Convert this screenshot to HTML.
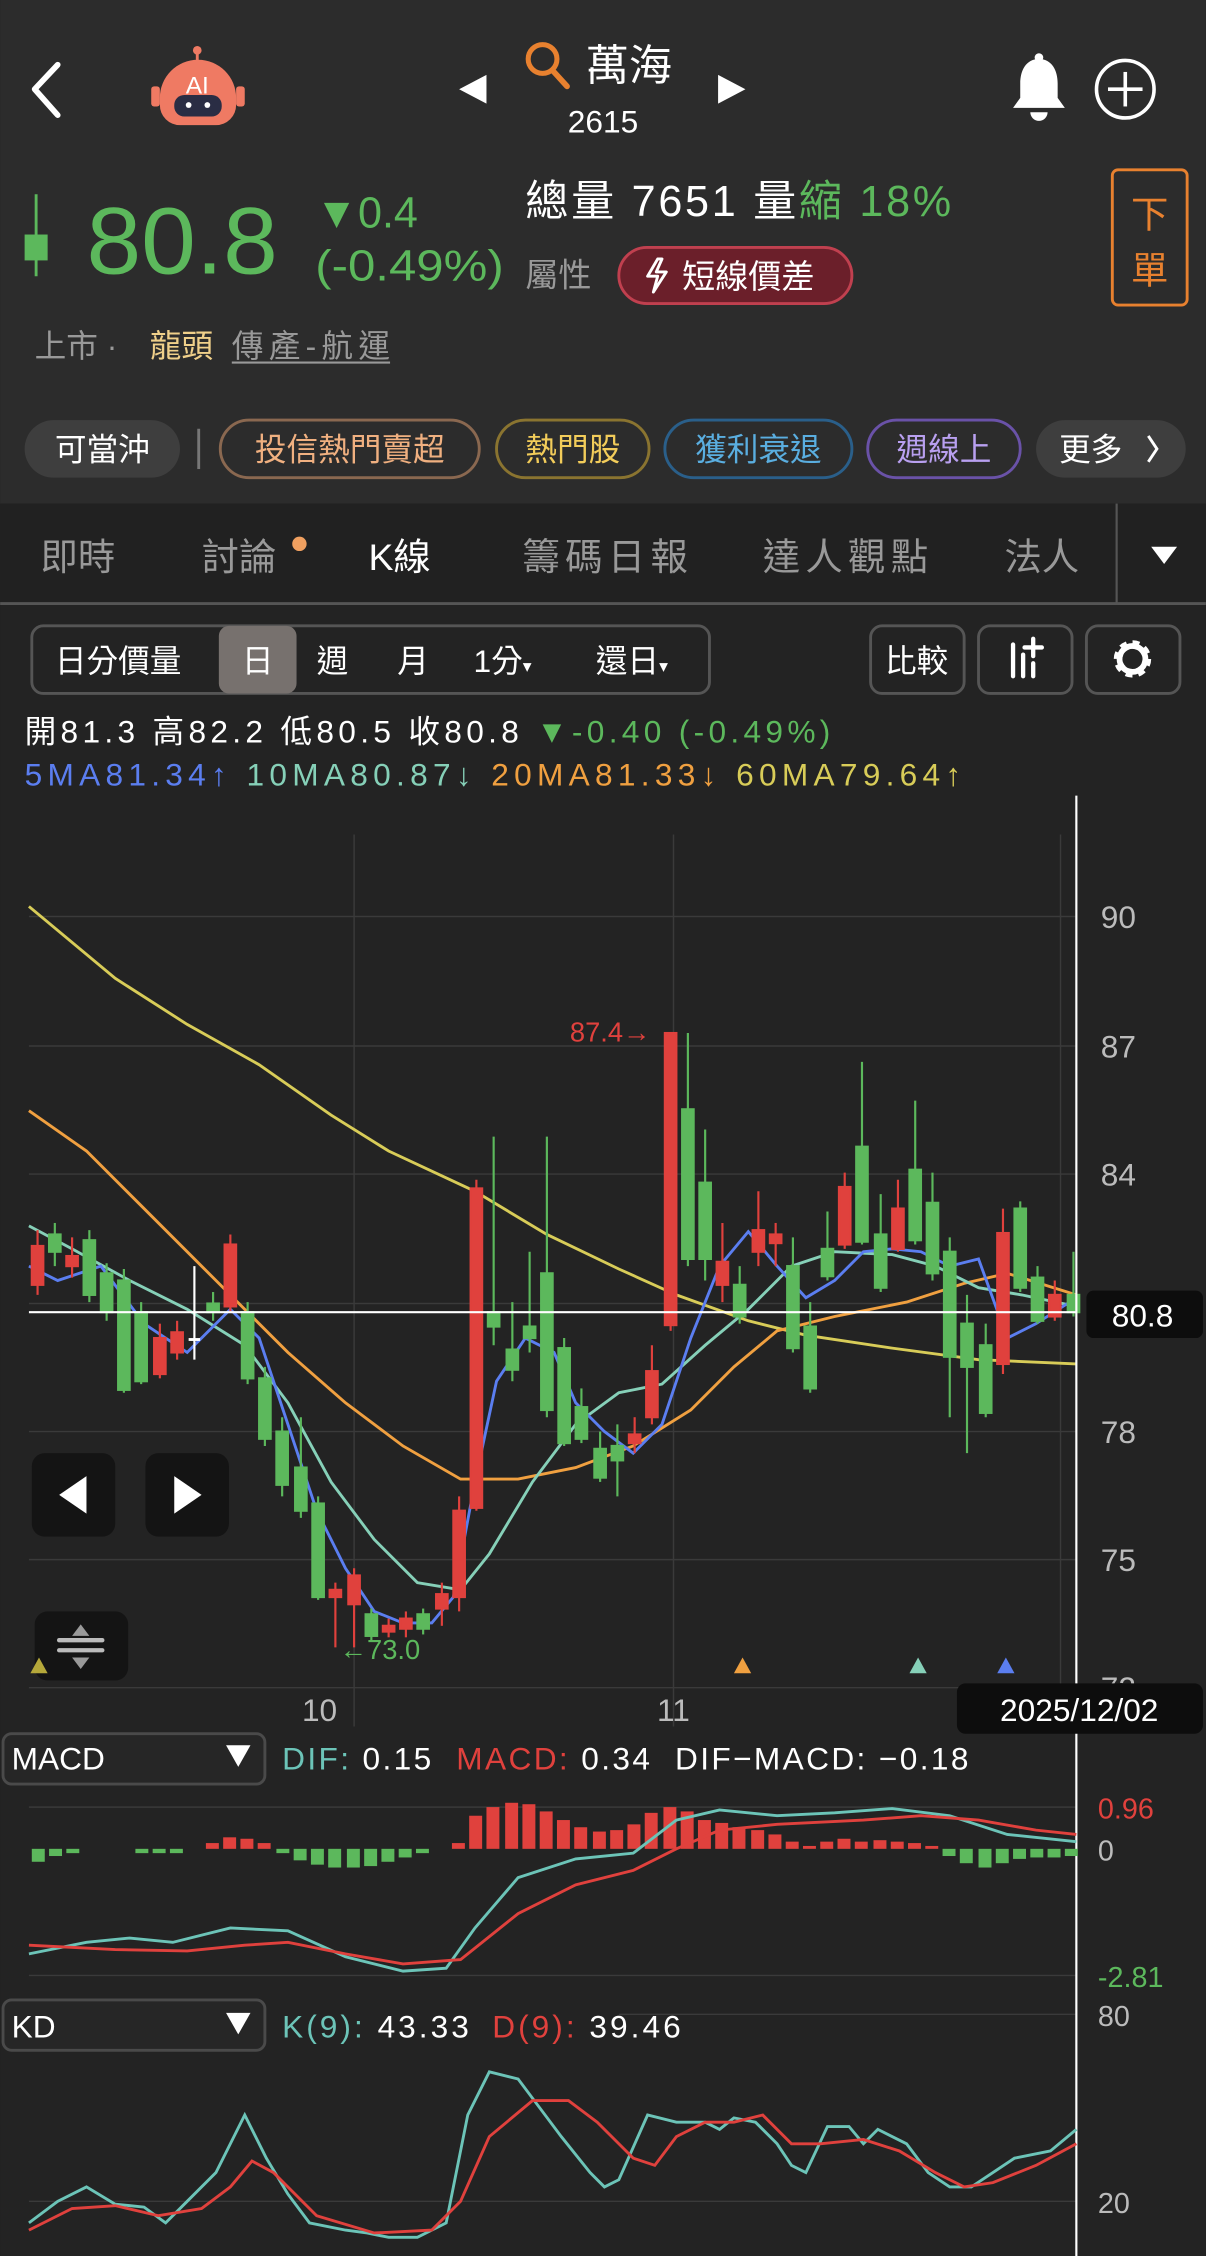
<!DOCTYPE html>
<html><head><meta charset="utf-8">
<style>
html,body{margin:0;padding:0;background:#232323;}
svg{display:block;}
text{font-family:"Liberation Sans","Noto Sans CJK TC",sans-serif;}
</style></head><body>
<svg width="1206" height="2256" viewBox="0 0 838 1568" xmlns="http://www.w3.org/2000/svg">
<rect x="0" y="0" width="838" height="350" fill="#2c2c2c"/>
<rect x="0" y="350" width="838" height="70" fill="#212121"/>
<rect x="0" y="420" width="838" height="1148" fill="#232323"/>
<line x1="0" y1="419.5" x2="838" y2="419.5" stroke="#555" stroke-width="2"/>

<!-- header -->
<path d="M40 45 L24 62 L40 80" fill="none" stroke="#fff" stroke-width="4" stroke-linecap="round" stroke-linejoin="round"/>
<g>
<line x1="137" y1="35" x2="137" y2="44" stroke="#ef7a63" stroke-width="2"/>
<circle cx="137" cy="35" r="3" fill="#ef7a63"/>
<rect x="105" y="60" width="6" height="14" rx="2" fill="#ef7a63"/>
<rect x="164" y="60" width="6" height="14" rx="2" fill="#ef7a63"/>
<path d="M111 68 a26 26 0 0 1 53 0 v5 a14 14 0 0 1 -14 14 h-25 a14 14 0 0 1 -14 -14z" fill="#ef7a63"/>
<rect x="121" y="66" width="33" height="15" rx="7" fill="#2a2d44"/>
<circle cx="131" cy="73" r="2" fill="#fff"/><circle cx="144" cy="73" r="2" fill="#fff"/>
<text x="137" y="65" font-size="17" fill="#fff" text-anchor="middle">AI</text>
</g>
<path d="M338 52 L319 62 L338 72Z" fill="#fff"/>
<path d="M499 52 L518 62 L499 72Z" fill="#fff"/>
<circle cx="377" cy="41" r="10" fill="none" stroke="#e8812f" stroke-width="3.5"/>
<line x1="384" y1="49" x2="394" y2="60" stroke="#e8812f" stroke-width="4" stroke-linecap="round"/>
<text x="407" y="56" font-size="30" fill="#fff">萬海</text>
<text x="419" y="92" font-size="22" fill="#fff" text-anchor="middle">2615</text>
<path d="M722 41 c-9 0 -13 8 -13 17 v10 l-5 7 h36 l-5 -7 v-10 c0 -9 -4 -17 -13 -17z" fill="#fff"/>
<circle cx="722" cy="40" r="3" fill="#fff"/>
<path d="M716 78 a6 6 0 0 0 12 0z" fill="#fff"/>
<circle cx="782" cy="62" r="20" fill="none" stroke="#fff" stroke-width="2.5"/>
<line x1="770" y1="62" x2="794" y2="62" stroke="#fff" stroke-width="2.5"/>
<line x1="782" y1="50" x2="782" y2="74" stroke="#fff" stroke-width="2.5"/>

<!-- price -->
<line x1="25" y1="135" x2="25" y2="192" stroke="#5cb85c" stroke-width="2"/>
<rect x="17" y="163" width="16" height="18" fill="#5cb85c"/>
<text x="60" y="190" font-size="66" fill="#5cb85c" textLength="133" lengthAdjust="spacingAndGlyphs">80.8</text>
<text x="219" y="158" font-size="30" fill="#5cb85c">▼0.4</text>
<text x="219" y="195" font-size="30" fill="#5cb85c" textLength="131" lengthAdjust="spacingAndGlyphs">(-0.49%)</text>
<text x="365" y="150" font-size="30" fill="#fff" textLength="296" lengthAdjust="spacing">總量 7651  量<tspan fill="#5cb85c">縮 18%</tspan></text>
<text x="365" y="199" font-size="23" fill="#999">屬性</text>
<rect x="430" y="172" width="162" height="39" rx="19.5" fill="#6b1f2a" stroke="#c0404f" stroke-width="2"/>
<path d="M457 180 l-7 12 h7 l-3 11 l9 -14 h-7 l4 -9z" fill="none" stroke="#fff" stroke-width="2" stroke-linejoin="round"/>
<text x="474" y="200" font-size="23" fill="#fff">短線價差</text>
<rect x="773" y="118" width="52" height="94" rx="4" fill="none" stroke="#e8812f" stroke-width="2"/>
<text x="799" y="158" font-size="26" fill="#e8812f" text-anchor="middle">下</text>
<text x="799" y="197" font-size="26" fill="#e8812f" text-anchor="middle">單</text>
<text x="24" y="248" font-size="22" fill="#999">上市 ·</text>
<text x="104" y="248" font-size="22" fill="#f0d08a">龍頭</text>
<text x="161" y="248" font-size="22" fill="#999" textLength="110" lengthAdjust="spacing">傳產-航運</text>
<line x1="161" y1="252" x2="271" y2="252" stroke="#999" stroke-width="1.5"/>

<!-- tags -->
<rect x="17" y="292" width="108" height="40" rx="20" fill="#3e3e3e"/>
<text x="71" y="320" font-size="22" fill="#fff" text-anchor="middle">可當沖</text>
<line x1="138" y1="298" x2="138" y2="326" stroke="#777" stroke-width="2"/>
<rect x="153" y="292" width="180" height="40" rx="20" fill="none" stroke="#8a6850" stroke-width="2"/>
<text x="243" y="320" font-size="22" fill="#f0b080" text-anchor="middle">投信熱門賣超</text>
<rect x="345" y="292" width="106" height="40" rx="20" fill="none" stroke="#8a7430" stroke-width="2"/>
<text x="398" y="320" font-size="22" fill="#f2cc5a" text-anchor="middle">熱門股</text>
<rect x="462" y="292" width="130" height="40" rx="20" fill="none" stroke="#2a5f8a" stroke-width="2"/>
<text x="527" y="320" font-size="22" fill="#5aaee0" text-anchor="middle">獲利衰退</text>
<rect x="603" y="292" width="106" height="40" rx="20" fill="none" stroke="#6a52a8" stroke-width="2"/>
<text x="656" y="320" font-size="22" fill="#b9a0f0" text-anchor="middle">週線上</text>
<rect x="720" y="292" width="104" height="40" rx="20" fill="#3e3e3e"/>
<text x="736" y="320" font-size="22" fill="#fff">更多</text>
<path d="M798 303 l6 9 l-6 9" fill="none" stroke="#fff" stroke-width="2"/>

<!-- tabs -->
<text x="28" y="396" font-size="26" fill="#999">即時</text>
<text x="140" y="396" font-size="26" fill="#999">討論</text>
<circle cx="208" cy="378" r="5" fill="#f0a060"/>
<text x="256" y="396" font-size="26" fill="#fff">K線</text>
<text x="363" y="396" font-size="26" fill="#999" textLength="115" lengthAdjust="spacing">籌碼日報</text>
<text x="530" y="396" font-size="26" fill="#999" textLength="115" lengthAdjust="spacing">達人觀點</text>
<text x="698" y="396" font-size="26" fill="#999">法人</text>
<line x1="776" y1="350" x2="776" y2="420" stroke="#555" stroke-width="1.5"/>
<path d="M800 380 h18 l-9 12z" fill="#fff"/>

<!-- toolbar -->
<rect x="22" y="435" width="471" height="47" rx="8" fill="none" stroke="#555" stroke-width="2"/>
<rect x="152" y="435" width="54" height="47" rx="7" fill="#77716e"/>
<g font-size="22" fill="#fff">
<text x="38" y="467">日分價量</text>
<text x="168" y="467">日</text>
<text x="220" y="467">週</text>
<text x="276" y="467">月</text>
<text x="329" y="467">1分<tspan font-size="12">▾</tspan></text>
<text x="414" y="467">還日<tspan font-size="12">▾</tspan></text>
</g>
<rect x="605" y="435" width="65" height="47" rx="8" fill="none" stroke="#555" stroke-width="2"/>
<text x="637" y="467" font-size="22" fill="#fff" text-anchor="middle">比較</text>
<rect x="680" y="435" width="65" height="47" rx="8" fill="none" stroke="#555" stroke-width="2"/>
<g stroke="#fff" stroke-width="3" stroke-linecap="round">
<line x1="704" y1="448" x2="704" y2="470"/><line x1="711" y1="455" x2="711" y2="470"/><line x1="718" y1="461" x2="718" y2="470"/>
<line x1="718" y1="444" x2="718" y2="456"/><line x1="712" y1="450" x2="724" y2="450"/>
</g>
<rect x="755" y="435" width="65" height="47" rx="8" fill="none" stroke="#555" stroke-width="2"/>
<g transform="translate(787,458)">
<circle r="10" fill="none" stroke="#fff" stroke-width="6" stroke-dasharray="4.2 3.65"/>
<circle r="9" fill="none" stroke="#fff" stroke-width="4"/>
</g>

<text x="17" y="516" font-size="22" fill="#fff" textLength="560" lengthAdjust="spacing">開81.3 高82.2 低80.5 收80.8 <tspan fill="#5cb85c">▼-0.40 (-0.49%)</tspan></text>
<text x="17" y="546" font-size="22" textLength="651" lengthAdjust="spacing"><tspan fill="#5b7ef0">5MA81.34↑</tspan><tspan fill="#86d0b8" dx="10">10MA80.87↓</tspan><tspan fill="#f0a040" dx="10">20MA81.33↓</tspan><tspan fill="#d8cc58" dx="10">60MA79.64↑</tspan></text>

<!-- grid -->
<g stroke="#3a3a3a" stroke-width="1">
<line x1="20" y1="637" x2="748" y2="637"/><line x1="20" y1="727" x2="748" y2="727"/><line x1="20" y1="816" x2="748" y2="816"/>
<line x1="20" y1="906" x2="748" y2="906"/><line x1="20" y1="995" x2="748" y2="995"/><line x1="20" y1="1084" x2="748" y2="1084"/>
<line x1="20" y1="1173" x2="748" y2="1173"/>
<line x1="246" y1="580" x2="246" y2="1200"/><line x1="468" y1="580" x2="468" y2="1200"/><line x1="737" y1="580" x2="737" y2="1200"/>
<line x1="20" y1="1256" x2="748" y2="1256"/><line x1="20" y1="1373" x2="748" y2="1373"/>
<line x1="430" y1="1400" x2="748" y2="1400"/><line x1="20" y1="1530" x2="748" y2="1530"/>
</g>
<g font-size="22" fill="#bbb">
<text x="765" y="645">90</text><text x="765" y="735">87</text><text x="765" y="824">84</text>
<text x="765" y="1003">78</text><text x="765" y="1092">75</text><text x="765" y="1181">72</text>
</g>

<!-- MA lines -->
<g fill="none" stroke-width="2">
<polyline stroke="#d8cc58" points="20,630 80,680 130,712 180,740 230,775 270,800 330,828 380,858 430,882 470,900 520,918 560,928 620,937 680,945 748,948"/>
<polyline stroke="#f0a040" points="20,772 60,800 100,840 150,890 200,940 240,975 280,1005 320,1028 360,1028 400,1020 440,1005 480,980 510,950 540,925 580,915 630,905 670,892 700,885 748,900"/>
<polyline stroke="#86d0b8" points="20,852 50,868 90,890 130,910 170,935 200,975 230,1030 260,1070 290,1100 320,1105 340,1080 370,1030 400,990 430,968 460,962 490,935 520,910 550,880 580,870 620,872 650,880 680,895 710,900 748,908"/>
<polyline stroke="#5b7ef0" points="20,880 40,890 70,880 100,920 130,940 160,910 180,930 200,990 220,1050 240,1090 260,1120 280,1128 300,1128 315,1110 330,1030 345,960 365,930 385,940 400,975 420,995 440,1010 460,990 480,930 500,880 520,856 540,880 560,902 580,890 600,870 620,868 640,870 660,880 680,875 700,930 720,920 748,902"/>
</g>

<!-- candles -->
<g stroke-width="1.5">
<g stroke="#e0413d" fill="#e0413d">
<line x1="26" y1="855" x2="26" y2="900"/><rect x="22" y="866" width="8" height="27"/>
<line x1="50" y1="860" x2="50" y2="888"/><rect x="46" y="873" width="8" height="7"/>
<line x1="111" y1="920" x2="111" y2="958"/><rect x="107" y="930" width="8" height="25"/>
<line x1="123" y1="918" x2="123" y2="945"/><rect x="119" y="926" width="8" height="14"/>
<line x1="160" y1="858" x2="160" y2="912"/><rect x="156" y="865" width="8" height="43"/>
<line x1="233" y1="1100" x2="233" y2="1145"/><rect x="229" y="1105" width="8" height="5"/>
<line x1="246" y1="1090" x2="246" y2="1145"/><rect x="242" y="1095" width="8" height="20"/>
<line x1="270" y1="1125" x2="270" y2="1138"/><rect x="266" y="1130" width="8" height="4"/>
<line x1="282" y1="1120" x2="282" y2="1138"/><rect x="278" y="1125" width="8" height="7"/>
<line x1="307" y1="1100" x2="307" y2="1130"/><rect x="303" y="1108" width="8" height="10"/>
<line x1="319" y1="1040" x2="319" y2="1120"/><rect x="315" y="1050" width="8" height="60"/>
<line x1="331" y1="820" x2="331" y2="1050"/><rect x="327" y="826" width="8" height="222"/>
<line x1="441" y1="985" x2="441" y2="1010"/><rect x="437" y="997" width="8" height="6"/>
<line x1="453" y1="935" x2="453" y2="990"/><rect x="449" y="953" width="8" height="32"/>
<line x1="466" y1="718" x2="466" y2="925"/><rect x="462" y="718" width="8" height="203"/>
<line x1="502" y1="850" x2="502" y2="905"/><rect x="498" y="877" width="8" height="16"/>
<line x1="527" y1="828" x2="527" y2="880"/><rect x="523" y="855" width="8" height="15"/>
<line x1="539" y1="850" x2="539" y2="880"/><rect x="535" y="858" width="8" height="6"/>
<line x1="587" y1="815" x2="587" y2="868"/><rect x="583" y="825" width="8" height="40"/>
<line x1="624" y1="820" x2="624" y2="870"/><rect x="620" y="840" width="8" height="28"/>
<line x1="697" y1="840" x2="697" y2="955"/><rect x="693" y="857" width="8" height="91"/>
<line x1="733" y1="890" x2="733" y2="918"/><rect x="729" y="900" width="8" height="15"/>
</g>
<g stroke="#5cb85c" fill="#5cb85c">
<line x1="38" y1="850" x2="38" y2="880"/><rect x="34" y="858" width="8" height="12"/>
<line x1="62" y1="855" x2="62" y2="905"/><rect x="58" y="862" width="8" height="38"/>
<line x1="74" y1="878" x2="74" y2="918"/><rect x="70" y="885" width="8" height="27"/>
<line x1="86" y1="882" x2="86" y2="968"/><rect x="82" y="890" width="8" height="76"/>
<line x1="98" y1="905" x2="98" y2="962"/><rect x="94" y="912" width="8" height="48"/>
<line x1="148" y1="898" x2="148" y2="918"/><rect x="144" y="906" width="8" height="6"/>
<line x1="172" y1="905" x2="172" y2="962"/><rect x="168" y="912" width="8" height="46"/>
<line x1="184" y1="950" x2="184" y2="1005"/><rect x="180" y="958" width="8" height="42"/>
<line x1="196" y1="985" x2="196" y2="1040"/><rect x="192" y="995" width="8" height="37"/>
<line x1="209" y1="985" x2="209" y2="1055"/><rect x="205" y="1020" width="8" height="30"/>
<line x1="221" y1="1040" x2="221" y2="1112"/><rect x="217" y="1045" width="8" height="65"/>
<line x1="258" y1="1118" x2="258" y2="1140"/><rect x="254" y="1122" width="8" height="15"/>
<line x1="294" y1="1118" x2="294" y2="1136"/><rect x="290" y="1122" width="8" height="10"/>
<line x1="343" y1="790" x2="343" y2="935"/><rect x="339" y="912" width="8" height="10"/>
<line x1="356" y1="905" x2="356" y2="960"/><rect x="352" y="938" width="8" height="14"/>
<line x1="368" y1="870" x2="368" y2="940"/><rect x="364" y="922" width="8" height="8"/>
<line x1="380" y1="790" x2="380" y2="985"/><rect x="376" y="885" width="8" height="95"/>
<line x1="392" y1="930" x2="392" y2="1005"/><rect x="388" y="937" width="8" height="66"/>
<line x1="404" y1="965" x2="404" y2="1003"/><rect x="400" y="978" width="8" height="22"/>
<line x1="417" y1="995" x2="417" y2="1030"/><rect x="413" y="1007" width="8" height="20"/>
<line x1="429" y1="990" x2="429" y2="1040"/><rect x="425" y="1005" width="8" height="10"/>
<line x1="478" y1="718" x2="478" y2="880"/><rect x="474" y="771" width="8" height="104"/>
<line x1="490" y1="785" x2="490" y2="890"/><rect x="486" y="822" width="8" height="53"/>
<line x1="514" y1="880" x2="514" y2="920"/><rect x="510" y="893" width="8" height="22"/>
<line x1="551" y1="860" x2="551" y2="940"/><rect x="547" y="880" width="8" height="57"/>
<line x1="563" y1="905" x2="563" y2="968"/><rect x="559" y="922" width="8" height="43"/>
<line x1="575" y1="842" x2="575" y2="890"/><rect x="571" y="868" width="8" height="19"/>
<line x1="599" y1="738" x2="599" y2="865"/><rect x="595" y="797" width="8" height="66"/>
<line x1="612" y1="830" x2="612" y2="898"/><rect x="608" y="858" width="8" height="37"/>
<line x1="636" y1="765" x2="636" y2="865"/><rect x="632" y="813" width="8" height="49"/>
<line x1="648" y1="815" x2="648" y2="890"/><rect x="644" y="836" width="8" height="49"/>
<line x1="660" y1="860" x2="660" y2="985"/><rect x="656" y="870" width="8" height="73"/>
<line x1="672" y1="900" x2="672" y2="1010"/><rect x="668" y="920" width="8" height="30"/>
<line x1="685" y1="920" x2="685" y2="985"/><rect x="681" y="935" width="8" height="47"/>
<line x1="709" y1="835" x2="709" y2="898"/><rect x="705" y="840" width="8" height="55"/>
<line x1="721" y1="880" x2="721" y2="920"/><rect x="717" y="888" width="8" height="30"/>
<line x1="746" y1="870" x2="746" y2="915"/><rect x="742" y="900" width="8" height="12"/>
</g>
<line x1="135" y1="880" x2="135" y2="945" stroke="#fff"/><line x1="131" y1="931" x2="139" y2="931" stroke="#fff" stroke-width="2"/>
</g>
<text x="396" y="724" font-size="19" fill="#e0413d">87.4→</text>
<text x="236" y="1153" font-size="19" fill="#5cb85c">←73.0</text>

<!-- crosshair -->
<line x1="748" y1="553" x2="748" y2="1568" stroke="#fff" stroke-width="1.5"/>
<line x1="20" y1="912" x2="748" y2="912" stroke="#fff" stroke-width="1.5"/>
<rect x="755" y="897" width="81" height="33" rx="5" fill="#0d0d0d"/>
<text x="794" y="922" font-size="22" fill="#fff" text-anchor="middle">80.8</text>

<!-- nav buttons -->
<rect x="22" y="1010" width="58" height="58" rx="9" fill="#141414"/>
<path d="M60 1026 L41 1039 L60 1052Z" fill="#fff"/>
<rect x="101" y="1010" width="58" height="58" rx="9" fill="#141414"/>
<path d="M121 1026 L140 1039 L121 1052Z" fill="#fff"/>
<rect x="24" y="1120" width="65" height="48" rx="9" fill="#141414"/>
<path d="M56 1129 l-6 8 h12z M56 1160 l-6 -8 h12z" fill="#999"/>
<line x1="41" y1="1140" x2="71" y2="1140" stroke="#bbb" stroke-width="3" stroke-linecap="round"/>
<line x1="41" y1="1147" x2="71" y2="1147" stroke="#bbb" stroke-width="3" stroke-linecap="round"/>
<path d="M27 1152 l-6 11 h12z" fill="#b5a83a"/>
<path d="M516 1152 l-6 11 h12z" fill="#f0a040"/>
<path d="M638 1152 l-6 11 h12z" fill="#86d0b8"/>
<path d="M699 1152 l-6 11 h12z" fill="#5b7ef0"/>
<text x="222" y="1196" font-size="22" fill="#bbb" text-anchor="middle">10</text>
<text x="468" y="1196" font-size="22" fill="#bbb" text-anchor="middle">11</text>
<rect x="665" y="1170" width="171" height="35" rx="6" fill="#0d0d0d"/>
<text x="750" y="1196" font-size="22" fill="#fff" text-anchor="middle">2025/12/02</text>

<!-- MACD -->
<rect x="2" y="1205" width="182" height="35" rx="6" fill="#262626" stroke="#4a4a4a" stroke-width="2"/>
<text x="8" y="1230" font-size="22" fill="#fff">MACD</text>
<path d="M157 1213 h17 l-8.5 15z" fill="#fff"/>
<text x="196" y="1230" font-size="22" textLength="477" lengthAdjust="spacing"><tspan fill="#6cc4b8">DIF:</tspan><tspan fill="#fff"> 0.15  </tspan><tspan fill="#e0413d" dx="8">MACD:</tspan><tspan fill="#fff"> 0.34  </tspan><tspan fill="#fff" dx="8">DIF−MACD: −0.18</tspan></text>
<text x="763" y="1264" font-size="20" fill="#e0413d">0.96</text>
<text x="763" y="1293" font-size="20" fill="#bbb">0</text>
<text x="763" y="1381" font-size="20" fill="#5cb85c">-2.81</text>
<g fill="#5cb85c">
<rect x="22" y="1285" width="9" height="9"/><rect x="34" y="1285" width="9" height="5"/><rect x="46" y="1285" width="9" height="3"/>
<rect x="94" y="1285" width="9" height="3"/><rect x="106" y="1285" width="9" height="3"/><rect x="118" y="1285" width="9" height="3"/>
<rect x="192" y="1285" width="9" height="3"/><rect x="204" y="1285" width="9" height="8"/><rect x="216" y="1285" width="9" height="11"/><rect x="228" y="1285" width="9" height="13"/><rect x="241" y="1285" width="9" height="13"/><rect x="253" y="1285" width="9" height="12"/><rect x="265" y="1285" width="9" height="9"/><rect x="277" y="1285" width="9" height="6"/><rect x="289" y="1285" width="9" height="3"/>
<rect x="655" y="1285" width="9" height="5"/><rect x="667" y="1285" width="9" height="10"/><rect x="680" y="1285" width="9" height="13"/><rect x="692" y="1285" width="9" height="10"/><rect x="704" y="1285" width="9" height="7"/><rect x="716" y="1285" width="9" height="6"/><rect x="728" y="1285" width="9" height="6"/><rect x="740" y="1285" width="9" height="5"/>
</g>
<g fill="#e0413d">
<rect x="143" y="1281" width="9" height="4"/><rect x="155" y="1277" width="9" height="8"/><rect x="167" y="1278" width="9" height="7"/><rect x="179" y="1281" width="9" height="4"/>
<rect x="314" y="1281" width="9" height="4"/>
<rect x="326" y="1262" width="9" height="23"/><rect x="338" y="1256" width="9" height="29"/><rect x="351" y="1253" width="9" height="32"/><rect x="363" y="1254" width="9" height="31"/><rect x="375" y="1259" width="9" height="26"/><rect x="387" y="1265" width="9" height="20"/><rect x="399" y="1270" width="9" height="15"/><rect x="412" y="1273" width="9" height="12"/><rect x="424" y="1272" width="9" height="13"/><rect x="436" y="1268" width="9" height="17"/>
<rect x="448" y="1260" width="9" height="25"/><rect x="461" y="1256" width="9" height="29"/><rect x="473" y="1259" width="9" height="26"/><rect x="485" y="1265" width="9" height="20"/><rect x="497" y="1267" width="9" height="18"/><rect x="509" y="1270" width="9" height="15"/><rect x="522" y="1272" width="9" height="13"/><rect x="534" y="1275" width="9" height="10"/><rect x="546" y="1280" width="9" height="5"/><rect x="558" y="1283" width="9" height="2"/>
<rect x="570" y="1280" width="9" height="5"/><rect x="582" y="1278" width="9" height="7"/><rect x="594" y="1280" width="9" height="5"/><rect x="607" y="1279" width="9" height="6"/><rect x="619" y="1280" width="9" height="5"/><rect x="631" y="1281" width="9" height="4"/><rect x="643" y="1283" width="9" height="2"/>
</g>
<g fill="none" stroke-width="2">
<polyline stroke="#6cc4b8" points="20,1358 60,1350 90,1347 120,1350 160,1340 200,1342 240,1360 280,1370 310,1368 330,1340 360,1305 400,1292 420,1290 440,1288 470,1265 500,1258 540,1262 580,1260 620,1257 660,1262 700,1275 748,1280"/>
<polyline stroke="#e0413d" points="20,1352 80,1355 130,1356 170,1352 200,1350 240,1358 280,1365 320,1362 360,1330 400,1310 440,1300 470,1285 500,1272 540,1268 600,1265 640,1262 680,1265 720,1272 748,1275"/>
</g>

<!-- KD -->
<rect x="2" y="1390" width="182" height="35" rx="6" fill="#262626" stroke="#4a4a4a" stroke-width="2"/>
<text x="8" y="1416" font-size="22" fill="#fff">KD</text>
<path d="M157 1399 h17 l-8.5 15z" fill="#fff"/>
<text x="196" y="1416" font-size="22" textLength="277" lengthAdjust="spacing"><tspan fill="#6cc4b8">K(9):</tspan><tspan fill="#fff"> 43.33  </tspan><tspan fill="#e0413d" dx="6">D(9):</tspan><tspan fill="#fff"> 39.46</tspan></text>
<text x="763" y="1408" font-size="20" fill="#bbb">80</text>
<text x="763" y="1538" font-size="20" fill="#bbb">20</text>
<g fill="none" stroke-width="2">
<polyline stroke="#6cc4b8" points="20,1545 40,1530 60,1520 80,1532 100,1534 115,1545 130,1530 150,1510 160,1490 170,1470 185,1500 200,1525 215,1545 240,1550 255,1552 270,1555 290,1555 310,1545 325,1470 340,1440 360,1445 375,1465 390,1485 410,1510 420,1520 430,1515 450,1470 470,1475 490,1475 500,1480 510,1472 525,1475 540,1490 550,1505 560,1510 575,1478 590,1478 600,1490 610,1480 630,1490 645,1510 660,1520 675,1520 690,1510 705,1500 730,1495 748,1480"/>
<polyline stroke="#e0413d" points="20,1550 50,1535 80,1533 110,1540 140,1535 160,1520 175,1502 190,1510 220,1540 260,1552 300,1550 320,1530 340,1485 370,1460 395,1460 415,1475 440,1500 455,1505 470,1485 490,1475 510,1475 530,1470 550,1490 570,1490 600,1487 625,1495 650,1510 670,1520 690,1517 720,1505 748,1490"/>
</g>
</svg>
</body></html>
